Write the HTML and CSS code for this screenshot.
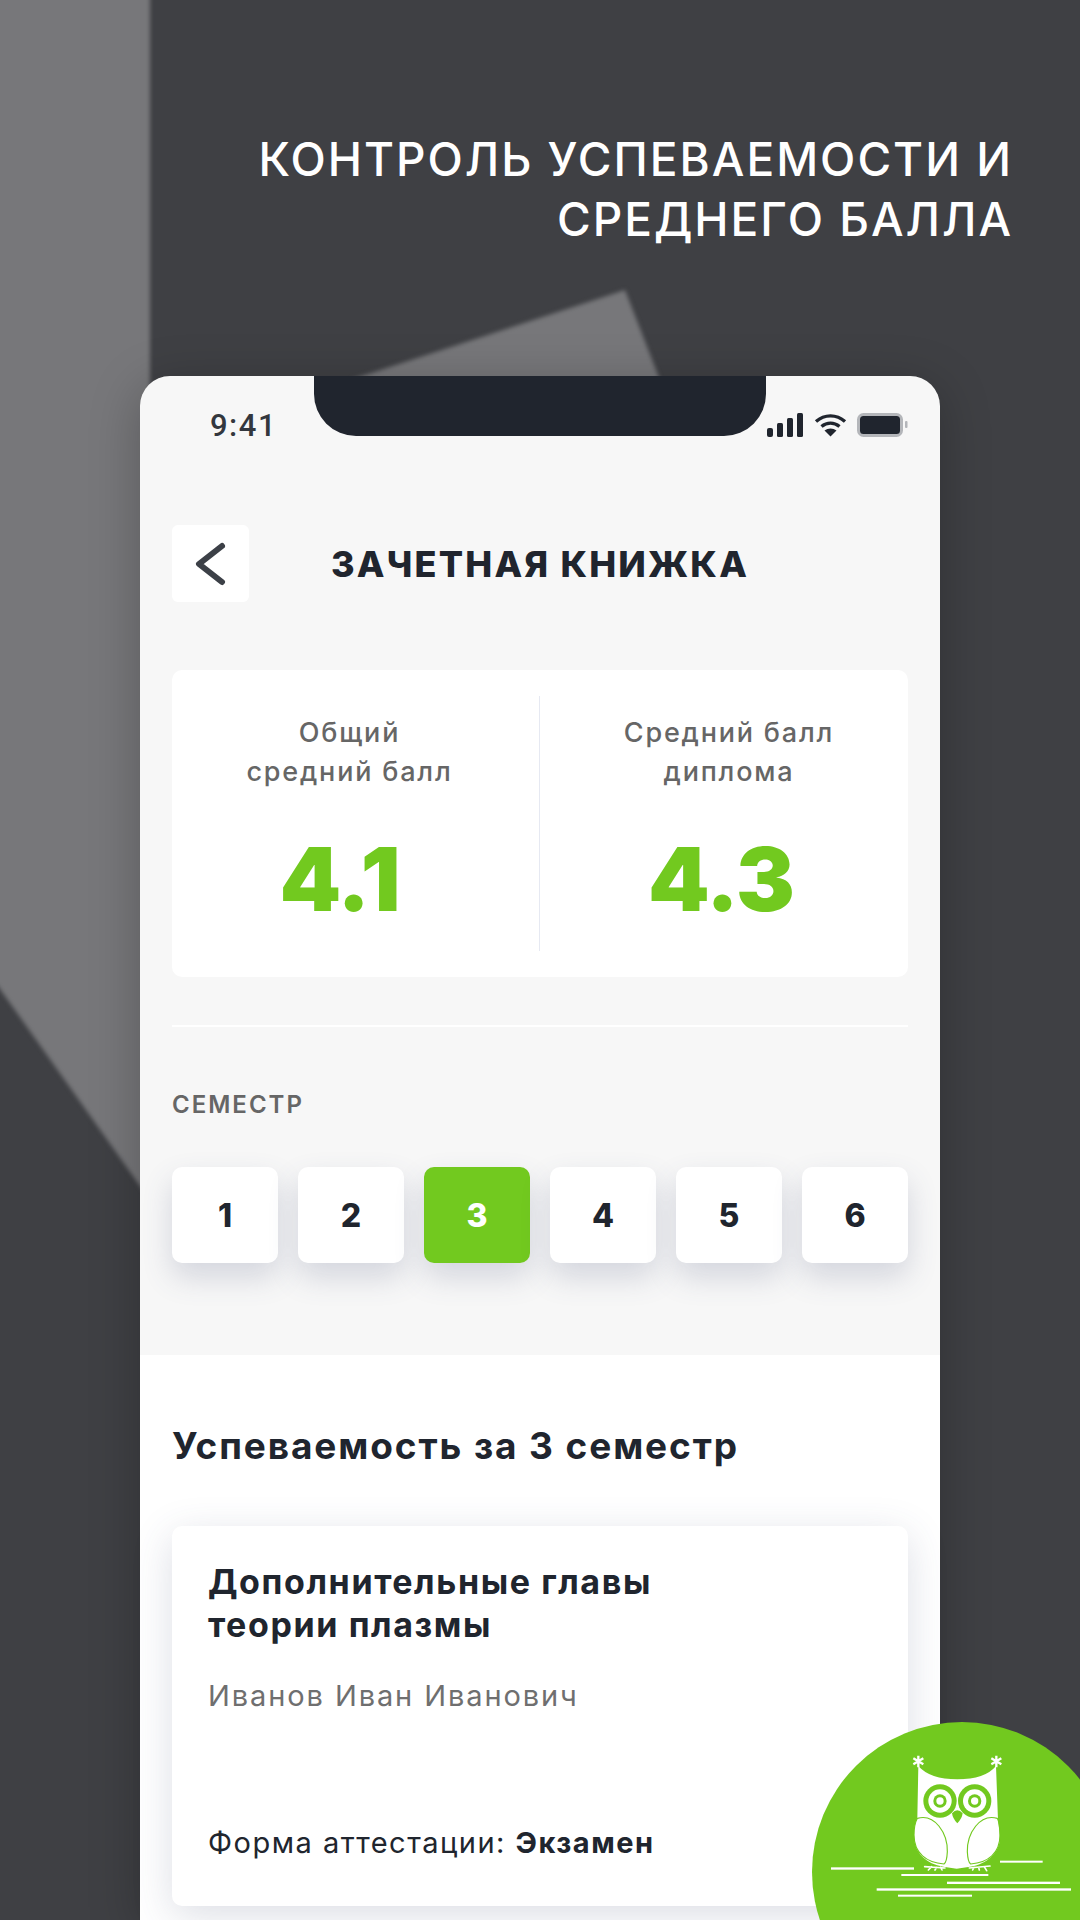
FILE: index.html
```html
<!DOCTYPE html>
<html lang="ru">
<head>
    <meta charset="UTF-8">
    <meta name="viewport" content="width=device-width, initial-scale=1.0">
    <title>Зачетная книжка</title>
    <link rel="stylesheet" href="styles.css">
</head>
<body>
    <div class="deco-wrap">
        <div class="deco deco-left"></div>
        <div class="deco deco-top"></div>
    </div>

    <h1 class="headline">КОНТРОЛЬ УСПЕВАЕМОСТИ И<br>СРЕДНЕГО БАЛЛА</h1>

    <div class="phone">
        <div class="notch"></div>

        <div class="status">
            <span class="time">9:41</span>
            <div class="status-icons">
                <svg width="37" height="24" viewBox="0 0 37 24" fill="#20252e">
                    <rect x="0" y="15" width="6" height="9" rx="2"/>
                    <rect x="10" y="10" width="6" height="14" rx="1.5"/>
                    <rect x="20" y="5" width="6" height="19" rx="1.5"/>
                    <rect x="30" y="0" width="6" height="24" rx="1.5"/>
                </svg>
                <svg width="33" height="24" viewBox="0 0 33 24" fill="none" stroke="#20252e" stroke-width="3.4">
                    <path d="M2 8.5C10.500 1 22.500 1 31 8.500"/>
                    <path d="M7.500 13.500C13 9 20 9 25.500 13.500"/>
                    <path d="M16.500 23.500L10.500 17.500C14 14.800 19 14.800 22.500 17.500Z" fill="#20252e" stroke="none"/>
                </svg>
                <svg width="52" height="24" viewBox="0 0 52 24">
                    <rect x="1.500" y="1.500" width="43" height="21" rx="5" fill="#20252e" stroke="#b4b6ba" stroke-width="3"/>
                    <rect x="48" y="8" width="2.500" height="7" rx="1" fill="#b4b6ba"/>
                </svg>
            </div>
        </div>

        <div class="nav">
            <div class="back">
                <svg width="32" height="44" viewBox="0 0 32 44" fill="none" stroke="#3c4047" stroke-width="6" stroke-linecap="round" stroke-linejoin="round">
                    <path d="M27 4L4 22L27 40"/>
                </svg>
            </div>
            <div class="nav-title">ЗАЧЕТНАЯ КНИЖКА</div>
        </div>

        <div class="scores">
            <div class="score score-first">
                <div class="score-label">Общий<br>средний балл</div>
                <div class="score-value">4.1</div>
            </div>
            <div class="score score-second">
                <div class="score-label">Средний балл<br>диплома</div>
                <div class="score-value">4.3</div>
            </div>
        </div>

        <div class="rule"></div>

        <div class="sem-label">СЕМЕСТР</div>
        <div class="sem-row">
            <div class="sem">1</div>
            <div class="sem">2</div>
            <div class="sem sem-active">3</div>
            <div class="sem">4</div>
            <div class="sem">5</div>
            <div class="sem">6</div>
        </div>

        <div class="results">
            <h2 class="results-title">Успеваемость за 3 семестр</h2>
            <div class="card">
                <div class="card-title">Дополнительные главы<br>теории плазмы</div>
                <div class="card-name">Иванов Иван Иванович</div>
                <div class="card-form">Форма аттестации: <b>Экзамен</b></div>
            </div>
        </div>
    </div>

    <!-- owl badge, coordinates are in 3x units -->
    <svg class="badge" width="300" height="230" viewBox="0 0 900 690">
        <circle cx="546" cy="546" r="450" fill="#72c91f"/>
        <g fill="#fff">
            <path d="M415 228Q450 268 532 268Q615 268 648 228L654 390L660 440C660 490 620 522 570 530L530 536L490 530C440 522 402 490 402 435C402 415 405 398 412 385Z"/>
            <rect x="153" y="532" width="249" height="7"/>
            <rect x="364" y="552" width="261" height="6"/>
            <rect x="501" y="575" width="339" height="7"/>
            <rect x="290" y="595" width="583" height="7"/>
            <rect x="354" y="614" width="222" height="6"/>
            <rect x="660" y="512" width="128" height="6"/>
        </g>
        <g fill="#72c91f">
            <circle cx="480" cy="333" r="50"/>
            <circle cx="584" cy="333" r="50"/>
        </g>
        <g fill="#fff">
            <circle cx="480" cy="333" r="35"/>
            <circle cx="584" cy="333" r="35"/>
        </g>
        <g fill="#72c91f">
            <circle cx="480" cy="333" r="20"/>
            <circle cx="584" cy="333" r="20"/>
        </g>
        <g fill="#fff">
            <circle cx="480" cy="333" r="11"/>
            <circle cx="584" cy="333" r="11"/>
        </g>
        <path d="M516 370Q532 352 548 370Q546 386 532 400Q518 386 516 370Z" fill="#72c91f"/>
        <g fill="none" stroke="#72c91f" stroke-width="3.500">
            <path d="M412 385C465 370 503 430 502 485C501 505 498 518 492 522C440 518 402 490 402 435C402 415 405 398 412 385"/>
            <path d="M652 385C599 370 561 430 562 485C563 505 566 518 572 522C624 518 660 490 660 435C660 415 659 398 652 385"/>
        </g>
        <g fill="none" stroke="#fff" stroke-width="5" stroke-linecap="round">
            <path d="M434 530L495 534M445 540L455 530M465 540L470 532M486 540L482 532"/>
            <path d="M568 534L630 528M578 540L582 532M598 540L596 532M620 542L614 532"/>
        </g>
        <g fill="none" stroke="#fff" stroke-width="7">
            <path d="M415 197V232M400 205L430 223M430 205L400 223"/>
            <path d="M649 197V232M634 205L664 223M664 205L634 223"/>
        </g>
    </svg>
</body>
</html>
```

FILE: styles.css
```css
html, body {
    margin: 0;
    padding: 0;
}

body {
    position: relative;
    width: 1080px;
    height: 1920px;
    overflow: hidden;
    background-color: #3f4044;
    font-family: Inter, "Noto Sans", sans-serif;
    color: #20252e;
}

.deco-wrap {
    position: absolute;
    left: 0;
    top: 0;
    width: 100%;
    height: 100%;
    filter: blur(2px);
}

.deco {
    position: absolute;
    background-color: #77777a;
}

.deco-left {
    left: -10px;
    top: -10px;
    width: 160px;
    height: 1210px;
    clip-path: polygon(0 0, 100% 0, 100% 100%, 0 985px);
}

.deco-top {
    left: 350px;
    top: 290px;
    width: 310px;
    height: 90px;
    clip-path: polygon(275px 0, 100% 100%, 0 100%);
}

.headline {
    position: relative;
    margin: 0;
    height: 376px;
    box-sizing: border-box;
    padding: 129px 67px 0 0;
    text-align: right;
    color: #fff;
    font-size: 46px;
    font-weight: 500;
    line-height: 60px;
    letter-spacing: 2px;
}

.phone {
    position: relative;
    width: 800px;
    height: 1544px;
    margin-left: 140px;
    background-color: #f7f7f7;
    border-radius: 30px 30px 0 0;
    box-shadow: 0 10px 50px rgba(0, 0, 0, 0.25);
}

.notch {
    position: absolute;
    left: 174px;
    top: 0;
    width: 452px;
    height: 60px;
    background-color: #20252e;
    border-radius: 0 0 42px 42px;
}

.status {
    display: flex;
    justify-content: space-between;
    align-items: center;
    height: 98px;
    padding: 0 31px 0 70px;
}

.time {
    font-family: Roboto, sans-serif;
    font-size: 31px;
    font-weight: 500;
    letter-spacing: 1.5px;
    color: #33373e;
}

.status-icons {
    display: flex;
    align-items: center;
    gap: 10px;
}

.nav {
    display: flex;
    align-items: center;
    margin: 51px 32px 0;
}

.back {
    display: flex;
    justify-content: center;
    align-items: center;
    width: 77px;
    height: 77px;
    background-color: #fff;
    border-radius: 6px;
}

.nav-title {
    margin-left: 82px;
    font-size: 36px;
    font-weight: 800;
    letter-spacing: 2.2px;
}

.scores {
    display: flex;
    box-sizing: border-box;
    height: 307px;
    margin: 68px 32px 0;
    padding: 26px 0;
    background-color: #fff;
    border-radius: 10px;
}

.score {
    display: flex;
    flex-direction: column;
    align-items: center;
    box-sizing: border-box;
    width: 50%;
    padding-top: 17px;
}

.score-first {
    padding-right: 12px;
    border-right: 1px solid #e6e9f2;
}

.score-second {
    padding-left: 10px;
}

.score-label {
    font-size: 27px;
    font-weight: 500;
    line-height: 39px;
    letter-spacing: 1.8px;
    text-align: center;
    color: #666;
}

.score-value {
    margin: 43px 16px 0 0;
    font-size: 88px;
    font-weight: 900;
    line-height: 90px;
    letter-spacing: -1px;
    color: #72c91f;
}

.score-first .score-value {
    margin-right: 20px;
}

.rule {
    height: 2px;
    margin: 48px 32px 0;
    background-color: #fff;
}

.sem-label {
    margin: 63px 32px 0;
    font-size: 24px;
    font-weight: 600;
    line-height: 30px;
    letter-spacing: 2px;
    color: #666;
}

.sem-row {
    display: grid;
    grid-template-columns: repeat(6, 1fr);
    gap: 20px;
    margin: 47px 32px 0;
}

.sem {
    display: flex;
    justify-content: center;
    align-items: center;
    height: 96px;
    background-color: #fff;
    border-radius: 10px;
    box-shadow: 0 14px 30px rgba(70, 80, 120, 0.2);
    font-size: 32px;
    font-weight: 800;
}

.sem-active {
    background-color: #72c91f;
    color: #fff;
}

.results {
    box-sizing: border-box;
    height: 565px;
    margin-top: 92px;
    padding: 69px 32px 0;
    background-color: #fff;
}

.results-title {
    margin: 0;
    font-size: 37px;
    font-weight: 700;
    line-height: 44px;
    letter-spacing: 1.9px;
}

.card {
    display: flex;
    flex-direction: column;
    box-sizing: border-box;
    height: 380px;
    margin-top: 58px;
    padding: 34px 36px 43px;
    background-color: #fff;
    border-radius: 10px;
    box-shadow: 0 10px 40px rgba(60, 70, 110, 0.18);
}

.card-title {
    font-size: 34px;
    font-weight: 700;
    line-height: 43px;
    letter-spacing: 1.6px;
}

.card-name {
    margin-top: 30px;
    font-size: 29px;
    line-height: 40px;
    letter-spacing: 1.9px;
    color: #6f6f6f;
}

.card-form {
    margin-top: auto;
    font-size: 29px;
    line-height: 40px;
    letter-spacing: 1.5px;
}

.card-form b {
    font-weight: 700;
}

.badge {
    position: absolute;
    left: 780px;
    top: 1690px;
}
```
